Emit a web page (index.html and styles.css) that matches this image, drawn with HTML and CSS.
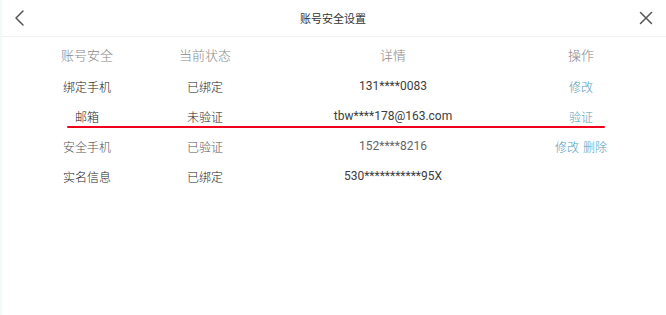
FILE: index.html
```html
<!DOCTYPE html>
<html lang="zh">
<head>
<meta charset="utf-8">
<title>账号安全设置</title>
<link rel="stylesheet" href="styles.css">
</head>
<body>
<div class="page">
  <header class="topbar">
    <button class="icon-btn back" aria-label="返回">
      <svg width="12" height="18" viewBox="0 0 12 18"><polyline points="9,2 2,9 9,16" fill="none" stroke="#555" stroke-width="1.5" stroke-linecap="round" stroke-linejoin="round"/></svg>
    </button>
    <h1 class="title">账号安全设置</h1>
    <button class="icon-btn close" aria-label="关闭">
      <svg width="14" height="14" viewBox="0 0 14 14"><path d="M1.5 1.5 L12.5 12.5 M12.5 1.5 L1.5 12.5" fill="none" stroke="#555" stroke-width="1.5" stroke-linecap="round"/></svg>
    </button>
  </header>
  <div class="table">
    <div class="row head">
      <div class="cell">账号安全</div>
      <div class="cell">当前状态</div>
      <div class="cell">详情</div>
      <div class="cell">操作</div>
    </div>
    <div class="row">
      <div class="cell">绑定手机</div>
      <div class="cell">已绑定</div>
      <div class="cell detail">131****0083</div>
      <div class="cell actions"><a class="link">修改</a></div>
    </div>
    <div class="row marked">
      <div class="cell">邮箱</div>
      <div class="cell">未验证</div>
      <div class="cell detail">tbw****178@163.com</div>
      <div class="cell actions"><a class="link">验证</a></div>
      <span class="underline-mark"></span>
    </div>
    <div class="row light">
      <div class="cell">安全手机</div>
      <div class="cell">已验证</div>
      <div class="cell detail">152****8216</div>
      <div class="cell actions"><a class="link">修改</a><a class="link">删除</a></div>
    </div>
    <div class="row">
      <div class="cell">实名信息</div>
      <div class="cell">已绑定</div>
      <div class="cell detail">530***********95X</div>
      <div class="cell actions"></div>
    </div>
  </div>
</div>
</body>
</html>
```

FILE: styles.css
```css
* { box-sizing: border-box; }
html, body { margin: 0; padding: 0; background: #fff; }
body {
  font-family: Roboto, "Noto Sans CJK SC", sans-serif;
  font-weight: 300;
  color: #333;
  width: 666px;
  height: 315px;
  overflow: hidden;
}
.page {
  height: 315px;
  border-left: 2px solid #f1faf8;
}
.topbar {
  height: 37px;
  border-bottom: 1px solid #f2f2f2;
  display: flex;
  align-items: center;
  justify-content: space-between;
  padding: 0 11px 0 9px;
}
.title {
  margin: 0;
  font-size: 11px;
  font-weight: 400;
  color: #333;
  flex: 1;
  text-align: center;
}
.icon-btn {
  border: 0;
  background: none;
  padding: 0;
  width: 18px;
  height: 18px;
  display: flex;
  align-items: center;
  justify-content: center;
}
.table {
  margin: 0 24px 0 26px;
}
.row {
  display: grid;
  grid-template-columns: 118px 118px 258px 118px;
  height: 30px;
  align-items: center;
  font-size: 12px;
  color: #222;
}
.row.head {
  height: 34px;
  font-size: 13px;
  color: #888;
}
.row.light { color: #555; }
.cell { text-align: center; white-space: nowrap; }
.detail { font-weight: 400; font-size: 12px; color: #3c3c3c; }
.row.light .detail { color: #666; }
.actions { display: flex; justify-content: center; gap: 4px; }
.link { color: #4f9dba; cursor: pointer; }
.marked { position: relative; }
.underline-mark {
  position: absolute;
  left: 39px;
  top: 25px;
  width: 538px;
  height: 2px;
  background: #f0001a;
  border-radius: 1px;
}
```
